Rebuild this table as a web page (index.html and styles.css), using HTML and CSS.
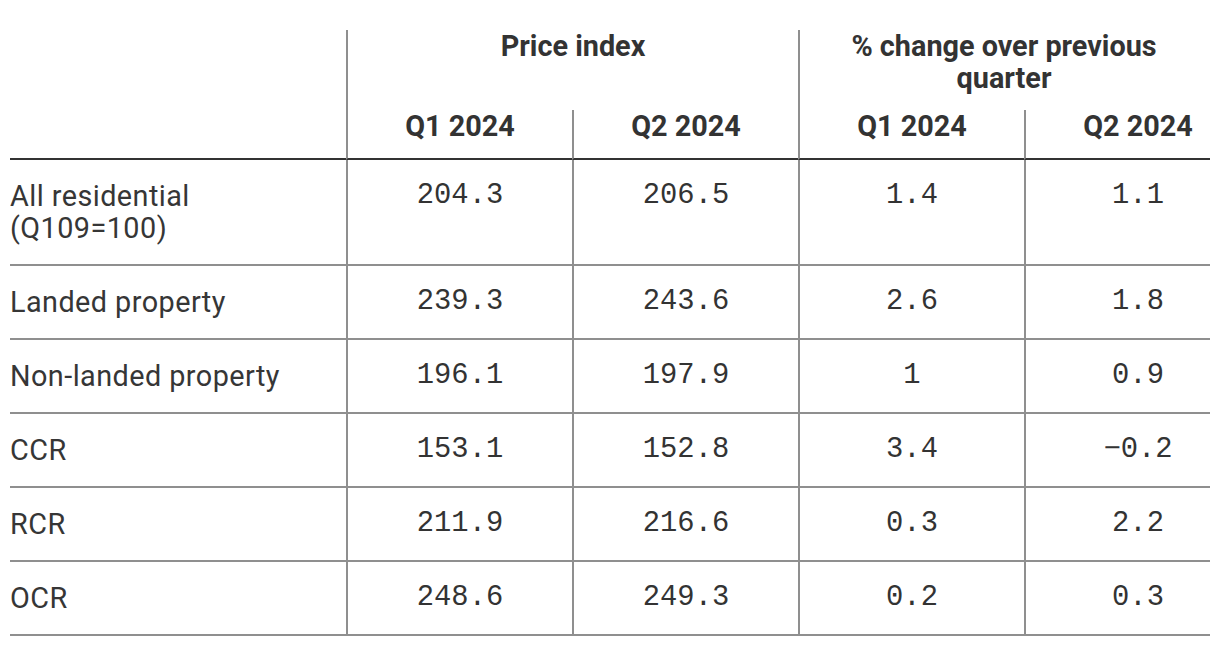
FILE: index.html
```html
<!DOCTYPE html>
<html lang="en">
<head>
<meta charset="utf-8">
<title>Private residential price index</title>
<link rel="stylesheet" href="styles.css">
</head>
<body>
<div class="table-wrap">
  <table class="data-table">
    <colgroup>
      <col class="col-label">
      <col class="col-num">
      <col class="col-num">
      <col class="col-num">
      <col class="col-num">
    </colgroup>
    <thead>
      <tr class="head-group">
        <th class="corner" rowspan="2"></th>
        <th class="group" colspan="2">Price index</th>
        <th class="group group-change" colspan="2">% change over previous<br>quarter</th>
      </tr>
      <tr class="head-sub">
        <th class="sub">Q1 2024</th>
        <th class="sub">Q2 2024</th>
        <th class="sub">Q1 2024</th>
        <th class="sub">Q2 2024</th>
      </tr>
    </thead>
    <tbody>
      <tr>
        <td class="label">All residential<br>(Q109=100)</td>
        <td class="num">204.3</td>
        <td class="num">206.5</td>
        <td class="num">1.4</td>
        <td class="num">1.1</td>
      </tr>
      <tr>
        <td class="label">Landed property</td>
        <td class="num">239.3</td>
        <td class="num">243.6</td>
        <td class="num">2.6</td>
        <td class="num">1.8</td>
      </tr>
      <tr>
        <td class="label">Non-landed property</td>
        <td class="num">196.1</td>
        <td class="num">197.9</td>
        <td class="num">1</td>
        <td class="num">0.9</td>
      </tr>
      <tr>
        <td class="label">CCR</td>
        <td class="num">153.1</td>
        <td class="num">152.8</td>
        <td class="num">3.4</td>
        <td class="num">&minus;0.2</td>
      </tr>
      <tr>
        <td class="label">RCR</td>
        <td class="num">211.9</td>
        <td class="num">216.6</td>
        <td class="num">0.3</td>
        <td class="num">2.2</td>
      </tr>
      <tr>
        <td class="label">OCR</td>
        <td class="num">248.6</td>
        <td class="num">249.3</td>
        <td class="num">0.2</td>
        <td class="num">0.3</td>
      </tr>
    </tbody>
  </table>
</div>
</body>
</html>
```

FILE: styles.css
```css
html, body {
  margin: 0;
  padding: 0;
  background: #ffffff;
}

body {
  color: #333333;
  font-family: Roboto, "Liberation Sans", Arial, sans-serif;
}

.table-wrap {
  margin: 30px 10px 0;
  overflow: hidden;
}

.data-table {
  table-layout: fixed;
  width: 1240px;
  border-collapse: separate;
  border-spacing: 0;
  font-size: 28.8px;
  line-height: 32px;
}

.col-label { width: 336px; }
.col-num { width: 226px; }

th {
  font-weight: 700;
  text-align: center;
  vertical-align: top;
  padding: 0 0 16px;
}

th.corner {
  border-bottom: 2px solid #333333;
  padding: 0;
}

th.group {
  border-left: 2px solid #8f8f8f;
}

th.group-change {
  padding-right: 42px;
}

th.sub {
  border-left: 2px solid #8f8f8f;
  border-bottom: 2px solid #333333;
}

td {
  vertical-align: top;
  padding: 20px 0;
  border-bottom: 2px solid #8f8f8f;
}

td.label {
  text-align: left;
  font-weight: 400;
  letter-spacing: 0.45px;
  color: #363636;
}

td.num {
  text-align: center;
  border-left: 2px solid #8f8f8f;
  font-family: "Liberation Mono", "DejaVu Sans Mono", monospace;
}
```
